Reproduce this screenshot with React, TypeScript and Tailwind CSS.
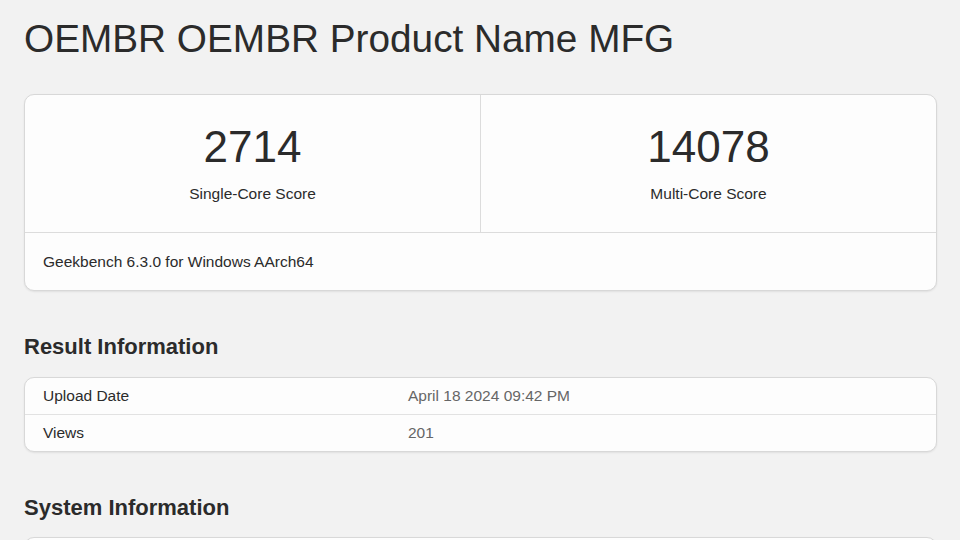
import React from 'react';

const font = { fontFamily: '"Liberation Sans", Arial, sans-serif' };

const ScoreCell = ({ score, label, border }: { score: string; label: string; border?: boolean }) => (
  <div className={`flex-1 flex flex-col items-center pt-[30px] pb-[26px] ${border ? 'border-r border-[#dcdcdc]' : ''}`}>
    <div className="text-[44px] leading-[44px] text-[#2b2b2b]">{score}</div>
    <div className="mt-[13px] text-[15.5px] leading-[24px] text-[#2b2b2b]">{label}</div>
  </div>
);

const InfoTable = ({ rows }: { rows: [string, string][] }) => (
  <div className="bg-[#fdfdfd] border border-[#d8d8d8] rounded-[10px] shadow-[0_1px_2px_rgba(0,0,0,0.08)]">
    {rows.map(([k, v], i) => (
      <div
        key={k}
        className={`flex items-center text-[15.5px] ${i > 0 ? 'h-[37px] border-t border-[#e2e2e2]' : 'h-[36px]'}`}
      >
        <div className="w-[383px] pl-[18px] text-[#2b2b2b]">{k}</div>
        <div className="text-[#666666]">{v}</div>
      </div>
    ))}
  </div>
);

export default function App() {
  return (
    <div className="min-h-screen bg-[#f2f2f2] pl-6 pr-[23px] pt-[15px]" style={font}>
      <h1 className="text-[38.75px] leading-[48px] text-[#2b2b2b]">OEMBR OEMBR Product Name MFG</h1>

      <div className="mt-[31px] bg-[#fdfdfd] border border-[#d8d8d8] rounded-[10px] shadow-[0_1px_2px_rgba(0,0,0,0.08)]">
        <div className="flex border-b border-[#dcdcdc]">
          <ScoreCell score="2714" label="Single-Core Score" border />
          <ScoreCell score="14078" label="Multi-Core Score" />
        </div>
        <div className="h-[57px] flex items-center pl-[18px] text-[15.5px] text-[#2b2b2b]">
          Geekbench 6.3.0 for Windows AArch64
        </div>
      </div>

      <h2 className="mt-[40px] text-[22px] leading-[32px] font-bold text-[#2b2b2b]">Result Information</h2>
      <div className="mt-[14px]">
        <InfoTable rows={[['Upload Date', 'April 18 2024 09:42 PM'], ['Views', '201']]} />
      </div>

      <h2 className="mt-[40px] text-[22px] leading-[32px] font-bold text-[#2b2b2b]">System Information</h2>
      <div className="mt-[13px]">
        <InfoTable rows={[['Operating System', 'Microsoft Windows 11 Pro (64-bit)'], ['Model', 'OEMBR OEMBR Product Name MFG']]} />
      </div>
    </div>
  );
}
